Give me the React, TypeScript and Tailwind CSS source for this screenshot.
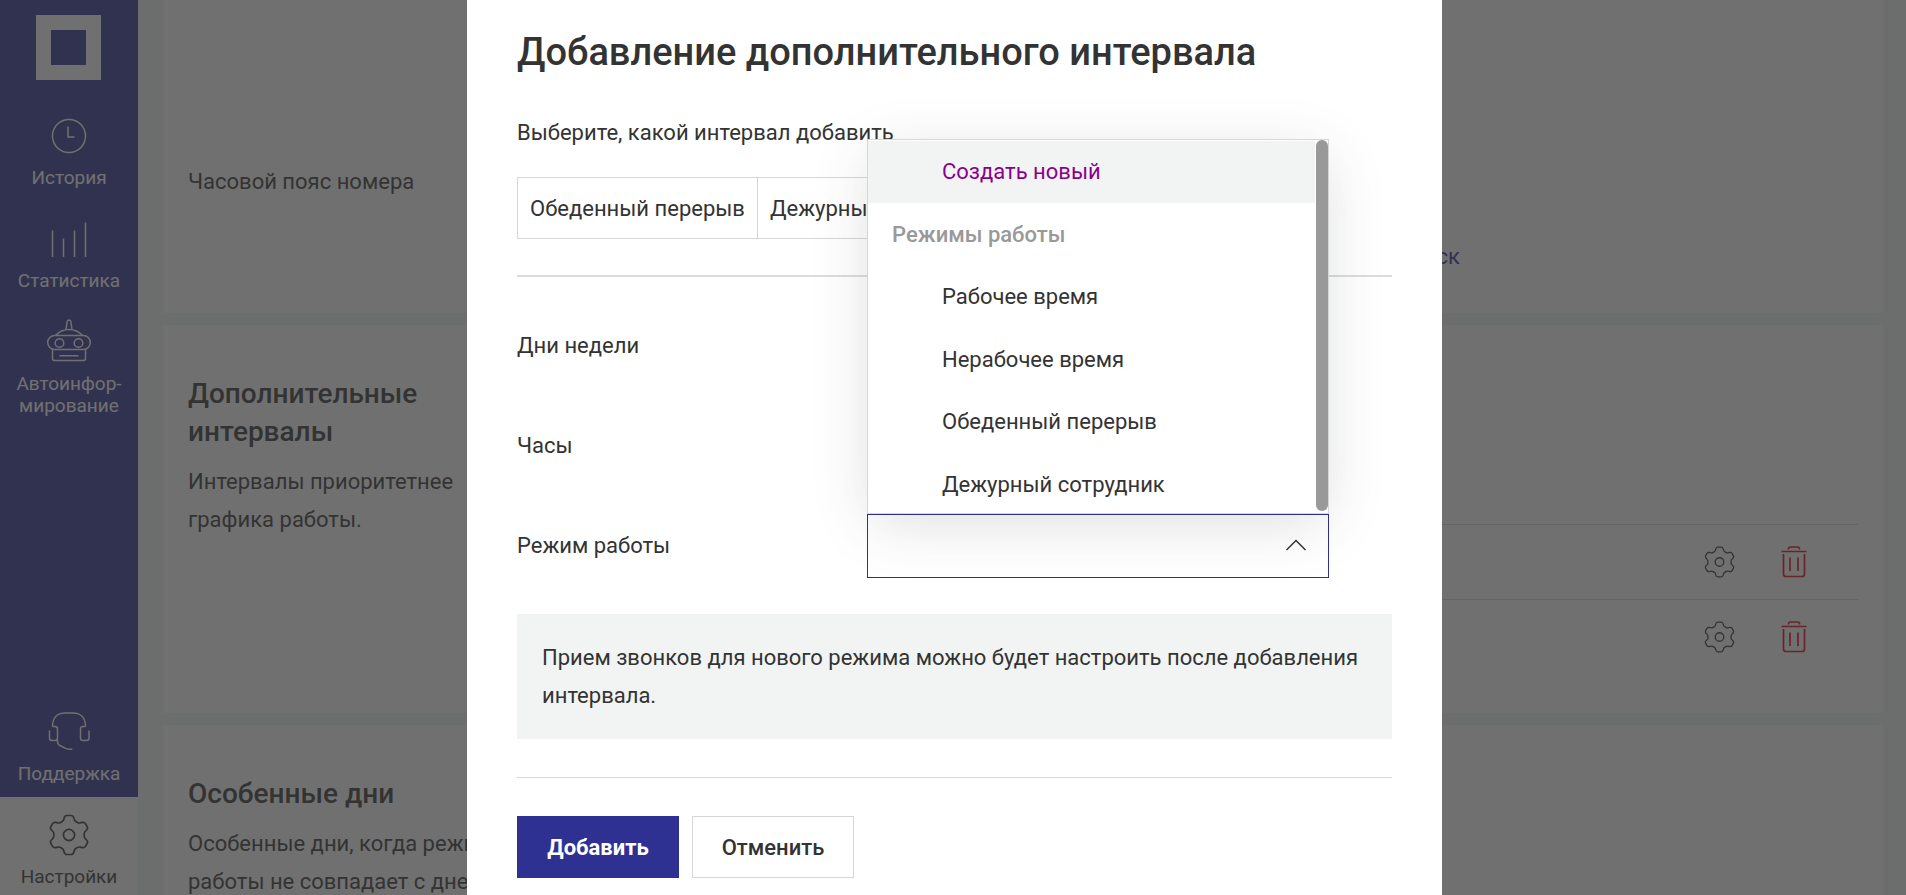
import { useState } from 'react';
import type { ReactNode } from 'react';

type IconProps = { className?: string };

function ClockIcon({ className }: IconProps) {
  return (
    <svg viewBox="0 0 50 50" className={className} fill="none" stroke="currentColor" strokeWidth="1.5">
      <circle cx="25" cy="25" r="16.5" />
      <path d="M24 15.500V26h6.500" />
    </svg>
  );
}

function BarsIcon({ className }: IconProps) {
  return (
    <svg viewBox="0 0 50 50" className={className} fill="none" stroke="currentColor" strokeWidth="1.5">
      <path d="M8.500 16.500v26.500M19.500 24.500v18.500M30.500 16.500v26.500M41.500 8.500v34.500" />
    </svg>
  );
}

function RobotIcon({ className }: IconProps) {
  return (
    <svg viewBox="0 0 50 50" className={className} fill="none" stroke="currentColor" strokeWidth="1.5">
      <path d="M22 12.500l1.200-8q.3-1.500 1.800-1.500t1.800 1.500l1.200 8" />
      <path d="M11.500 18.500q5.500-6 13.500-6t13.500 6" />
      <rect x="3.700" y="18.500" width="42.600" height="14" rx="7" />
      <circle cx="15.500" cy="26" r="4.300" />
      <circle cx="34.500" cy="26" r="4.300" />
      <path d="M8.500 32.500v9q0 2 2 2h29q2 0 2-2v-9M15.500 38.800h19" />
    </svg>
  );
}

function HeadsetIcon({ className }: IconProps) {
  return (
    <svg viewBox="0 0 50 50" className={className} fill="none" stroke="currentColor" strokeWidth="1.500">
      <path d="M8.500 19.500C8.500 11 13 6 21 6h8c8 0 12.500 5 12.500 13.500" />
      <path d="M8.500 19.500h2.500q2.500 0 2.500 2.500v9q0 2.500-2.500 2.500h-3q-2.500 0-2.500-2.500v-7.500" />
      <path d="M41.500 19.500h-2.500q-2.500 0-2.500 2.500v9q0 2.500 2.500 2.500h3.500q2.500 0 2.500-2.500v-7.500" />
      <path d="M13.500 33v1.500q0 3 2.800 4.300l6 2.800q1.500.6 3 .6h3" />
    </svg>
  );
}

function GearIcon({ className }: IconProps) {
  return (
    <svg viewBox="0 0 40 42" className={className} fill="none" stroke="currentColor" strokeWidth="1.700" strokeLinejoin="round">
      <path d="M17.800 1.500h4.400q2 0 2.600 2.200l.6 2q.4 1.300 1.800 2l1.200.7q1.400.8 2.800.5l2-.5q2.200-.5 3.200 1.200l1.800 3.100q1 1.700-.6 3.300l-1.400 1.500q-1 1-1 2.300v2.400q0 1.300 1 2.300l1.400 1.500q1.600 1.600.6 3.300l-1.800 3.100q-1 1.700-3.200 1.200l-2-.5q-1.400-.3-2.800.5l-1.200.7q-1.400.7-1.800 2l-.6 2q-.6 2.200-2.600 2.200h-4.400q-2 0-2.600-2.200l-.6-2q-.4-1.300-1.800-2l-1.200-.7q-1.400-.8-2.800-.5l-2 .5q-2.200.5-3.200-1.200l-1.800-3.100q-1-1.700.6-3.300l1.400-1.500q1-1 1-2.300v-2.400q0-1.300-1-2.300l-1.400-1.500q-1.600-1.600-.6-3.300l1.800-3.100q1-1.700 3.200-1.200l2 .5q1.400.3 2.800-.5l1.200-.7q1.400-.7 1.800-2l.6-2q.6-2.200 2.600-2.200z" />
      <circle cx="20" cy="21" r="5.600" />
    </svg>
  );
}

function TrashIcon({ className }: IconProps) {
  return (
    <svg viewBox="0 0 28 34" className={className} fill="none" stroke="currentColor" strokeWidth="1.700">
      <path d="M8.500 4.500V4q0-2 2-2h7q2 0 2 2v.5M1.500 6.500h25M3.500 9v20q0 2.500 2.500 2.500h16q2.500 0 2.500-2.500V9M10 12.500V26M18 12.500V26" />
    </svg>
  );
}

function NavItem({ icon, children, active = false }: { icon: ReactNode; children: ReactNode; active?: boolean }) {
  return (
    <a
      href="#"
      className={
        active
          ? 'flex h-[98px] flex-col items-center bg-white pt-3 text-center text-[19px] leading-[22px] text-[#333]'
          : 'flex min-h-[103px] flex-col items-center pt-3 text-center text-[19px] leading-[22px] text-white'
      }
    >
      <span className="mb-[5px] flex h-[52px] items-center">{icon}</span>
      <span>{children}</span>
    </a>
  );
}

function Sidebar() {
  return (
    <nav className="flex h-screen w-[138px] shrink-0 flex-col bg-[#2e3092]">
      <a href="#" aria-label="Главная" className="mt-[15px] mb-[18px] ml-9 block size-[65px] shrink-0 border-[15px] border-white" />
      <NavItem icon={<ClockIcon className="size-[50px]" />}>История</NavItem>
      <NavItem icon={<BarsIcon className="size-[50px]" />}>Статистика</NavItem>
      <NavItem icon={<RobotIcon className="size-[50px]" />}>
        Автоинфор-
        <br />
        мирование
      </NavItem>
      <div className="mt-auto">
        <NavItem icon={<HeadsetIcon className="size-[50px]" />}>Поддержка</NavItem>
        <NavItem active icon={<GearIcon className="h-[42px] w-10" />}>
          Настройки
        </NavItem>
      </div>
    </nav>
  );
}

function IntervalRow() {
  return (
    <li className="flex h-[75px] items-center justify-end gap-[45px] border-t border-[#d6d6d6] pr-[50px]">
      <button type="button" aria-label="Настроить" className="text-[#333]">
        <GearIcon className="h-8 w-[31px]" />
      </button>
      <button type="button" aria-label="Удалить" className="text-[#e3001b]">
        <TrashIcon className="h-[34px] w-7" />
      </button>
    </li>
  );
}

function SettingsPage() {
  return (
    <main className="flex min-w-0 flex-1 flex-col gap-3 bg-[#f1f4f3] pr-[23px] pl-[25px] text-[22px] leading-[38px]">
      <section className="h-[313px] shrink-0 bg-white px-[25px] pt-[163px]">
        <p>Часовой пояс номера</p>
        <div className="mt-[37px] flex justify-end pr-[398px]">
          <a href="#" className="text-[#2e3092]">
            ск
          </a>
        </div>
      </section>
      <section className="flex h-[388px] shrink-0 bg-white px-[25px] pt-[50px]">
        <div className="w-[280px] shrink-0">
          <h2 className="text-[28px] font-medium">Дополнительные интервалы</h2>
          <p className="mt-3">Интервалы приоритетнее графика работы.</p>
        </div>
        <ul className="mt-[149px] flex-1">
          <IntervalRow />
          <IntervalRow />
        </ul>
      </section>
      <section className="h-[388px] shrink-0 bg-white px-[25px] pt-[50px]">
        <h2 className="text-[28px] font-medium">Особенные дни</h2>
        <p className="mt-3 w-[320px]">Особенные дни, когда режим работы не совпадает с днем</p>
      </section>
    </main>
  );
}

const MODES = ['Рабочее время', 'Нерабочее время', 'Обеденный перерыв', 'Дежурный сотрудник'];

function ModeSelect() {
  const [open, setOpen] = useState(true);
  const [value, setValue] = useState('');
  const choose = (mode: string) => {
    setValue(mode);
    setOpen(false);
  };

  return (
    <div className="relative w-[462px]">
      <select
        id="mode"
        value={value}
        onChange={(e) => choose(e.target.value)}
        onMouseDown={(e) => {
          e.preventDefault();
          setOpen(!open);
        }}
        className="block h-16 w-full appearance-none border border-[#2e3092] bg-white px-6 outline-none"
      >
        <option value="" />
        {value && <option>{value}</option>}
      </select>
      {open && (
        <div className="absolute bottom-full left-0 flex h-[375px] w-full border border-[#d6d6d6] bg-white shadow-[0_12px_56px_-6px_rgba(51,61,58,0.18)]">
          <ul
            role="listbox"
            aria-label="Режим работы"
            className="mt-px mr-px flex-1 overflow-hidden *:flex *:items-center *:odd:h-[62px] *:even:h-[63px]"
          >
            <li role="option" aria-selected="true" onClick={() => choose('Создать новый')} className="bg-[#f1f4f3] pl-[74px] text-[#8b008b]">
              Создать новый
            </li>
            <li className="pl-6 font-medium text-[#999]">Режимы работы</li>
            {MODES.map((mode) => (
              <li key={mode} role="option" aria-selected="false" onClick={() => choose(mode)} className="pl-[74px]">
                {mode}
              </li>
            ))}
          </ul>
          <div className="h-[371px] w-3 rounded-full bg-[#999]" />
        </div>
      )}
      <svg viewBox="0 0 22 12" className="pointer-events-none absolute top-[25px] right-[22px] h-3 w-[22px]" fill="none" stroke="#333" strokeWidth="1.500">
        <path d="M1.500 11L11 1.500 20.500 11" />
      </svg>
    </div>
  );
}

function IntervalDialog() {
  return (
    <div className="fixed inset-0 flex justify-center overflow-hidden bg-[#333]/70 pl-[3px]">
      <form
        role="dialog"
        aria-labelledby="dialog-title"
        onSubmit={(e) => e.preventDefault()}
        className="h-full w-[975px] bg-white px-[50px] pt-[26px] text-[22px] leading-[38px]"
      >
        <h1 id="dialog-title" className="text-[38px] leading-[52px] font-medium">
          Добавление дополнительного интервала
        </h1>
        <p className="mt-9">Выберите, какой интервал добавить</p>
        <div className="mt-[25px] flex">
          <button type="button" className="h-[62px] border border-[#d6d6d6] px-3 pt-0.5">
            Обеденный перерыв
          </button>
          <button type="button" className="h-[62px] border border-l-0 border-[#d6d6d6] px-3 pt-0.5">
            Дежурный сотрудник
          </button>
        </div>
        <hr className="mt-9 h-0.5 border-0 bg-[#dcdcdc]" />
        <div className="mt-[19px] flex h-[100px] items-center">Дни недели</div>
        <div className="flex h-[100px] items-center">Часы</div>
        <div className="flex h-[100px] items-center">
          <label htmlFor="mode" className="w-[350px]">
            Режим работы
          </label>
          <ModeSelect />
        </div>
        <p className="mt-[18px] bg-[#f1f4f3] px-[25px] pt-[25px] pb-6">
          Прием звонков для нового режима можно будет настроить после добавления интервала.
        </p>
        <hr className="mt-[38px] border-[#d6d6d6]" />
        <div className="mt-[38px] flex gap-[13px]">
          <button type="submit" className="h-[62px] w-[162px] bg-[#2e3092] pt-0.5 font-bold text-white">
            Добавить
          </button>
          <button type="button" className="h-[62px] w-[162px] border border-[#d6d6d6] pt-0.5 font-medium">
            Отменить
          </button>
        </div>
      </form>
    </div>
  );
}

export default function App() {
  return (
    <div className="flex h-screen overflow-hidden bg-[#f1f4f3] font-['Roboto',sans-serif] text-[#333]">
      <Sidebar />
      <SettingsPage />
      <IntervalDialog />
    </div>
  );
}
